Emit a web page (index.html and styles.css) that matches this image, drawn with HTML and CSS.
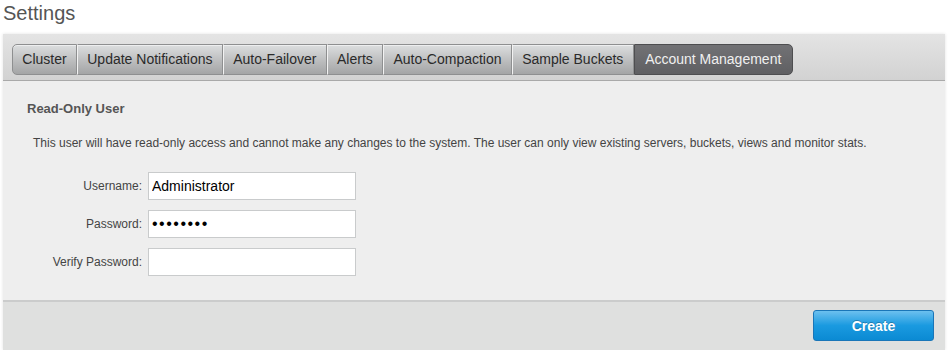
FILE: index.html
```html
<!DOCTYPE html>
<html>
<head>
<meta charset="utf-8">
<link rel="stylesheet" href="styles.css">
</head>
<body>
<h1 class="title">Settings</h1>
<div class="panel">
  <div class="tabbar">
    <ul class="tabs">
      <li class="tab first">Cluster</li>
      <li class="tab">Update Notifications</li>
      <li class="tab">Auto-Failover</li>
      <li class="tab">Alerts</li>
      <li class="tab">Auto-Compaction</li>
      <li class="tab">Sample Buckets</li>
      <li class="tab active">Account Management</li>
    </ul>
  </div>
  <div class="content">
    <h2 class="heading">Read-Only User</h2>
    <p class="desc">This user will have read-only access and cannot make any changes to the system. The user can only view existing servers, buckets, views and monitor stats.</p>
    <div class="form">
      <div class="row"><label class="label">Username:</label><input class="field" type="text" value="Administrator"></div>
      <div class="row"><label class="label">Password:</label><input class="field pw" type="password" value="password"></div>
      <div class="row"><label class="label">Verify Password:</label><input class="field pw" type="password" value=""></div>
    </div>
  </div>
  <div class="footer">
    <button class="btn">Create</button>
  </div>
</div>
</body>
</html>
```
FILE: styles.css
```css
html, body {
  margin: 0;
  padding: 0;
  background: #ffffff;
  font-family: "Liberation Sans", Arial, sans-serif;
}
body {
  padding: 0 3px;
}
.title {
  margin: 0;
  padding: 1px 0 0 0;
  height: 33px;
  font-size: 20px;
  font-weight: normal;
  color: #555555;
  line-height: 24px;
}
.panel {
  width: 942px;
  box-shadow: 0 0 3px rgba(0,0,0,0.12);
}
.tabbar {
  height: 47px;
  box-sizing: border-box;
  padding: 10px 0 0 9px;
  background: linear-gradient(#e4e4e4, #d2d2d2);
  border-bottom: 1px solid #a9a9a9;
}
.tabs {
  display: flex;
  margin: 0;
  padding: 0;
  list-style: none;
}
.tab {
  height: 31px;
  box-sizing: border-box;
  padding: 0 9.3px;
  font-size: 14px;
  line-height: 29px;
  color: #2a2a2a;
  background: linear-gradient(#dcdedf, #b9babb 60%, #a4a5a6);
  border: 1px solid #8e8f90;
  border-left: 1px solid #f2f2f2;
  box-shadow: inset 0 1px 0 rgba(255,255,255,0.5);
}
.tab.first {
  border-left: 1px solid #8e8f90;
  border-radius: 5px 0 0 5px;
}
.tab.active {
  color: #f0f0f0;
  background: linear-gradient(#727275, #5f5f62);
  border: 1px solid #4e4e50;
  border-radius: 0 5px 5px 0;
  padding: 0 10.5px;
  box-shadow: none;
}
.content {
  height: 219px;
  box-sizing: border-box;
  background: #eeeeee;
  padding: 20px 0 0 24px;
}
.heading {
  margin: 0;
  font-size: 13px;
  font-weight: bold;
  color: #555555;
  line-height: 16px;
}
.desc {
  margin: 19px 0 0 6px;
  font-size: 12px;
  color: #444444;
  line-height: 15px;
}
.form {
  display: flex;
  flex-direction: column;
  gap: 10px;
  margin-top: 21px;
}
.row {
  display: flex;
  align-items: center;
  gap: 6px;
}
.label {
  width: 115px;
  text-align: right;
  font-size: 12px;
  color: #444444;
}
.field {
  width: 208px;
  height: 28px;
  box-sizing: border-box;
  margin: 0;
  padding: 0 3px;
  border: 1px solid #c9cbcc;
  background: #ffffff;
  font-family: "Liberation Sans", Arial, sans-serif;
  font-size: 14px;
  color: #000000;
  outline: none;
}
.field.pw {
  font-size: 16px;
  letter-spacing: 1.5px;
}
.footer {
  height: 50px;
  box-sizing: border-box;
  border-top: 2px solid #cbcccc;
  background: #dfe0df;
  display: flex;
  justify-content: flex-end;
  padding: 8px 11px 0 0;
}
.btn {
  width: 121px;
  height: 31px;
  border: 1px solid #1a76b8;
  border-radius: 3px;
  background: linear-gradient(#6cc0ef, #1a9ae0 50%, #0b8ad3);
  color: #ffffff;
  font-family: "Liberation Sans", Arial, sans-serif;
  font-size: 14px;
  font-weight: bold;
  text-shadow: 0 -1px 0 rgba(0,0,0,0.25);
  padding: 0;
}
```
